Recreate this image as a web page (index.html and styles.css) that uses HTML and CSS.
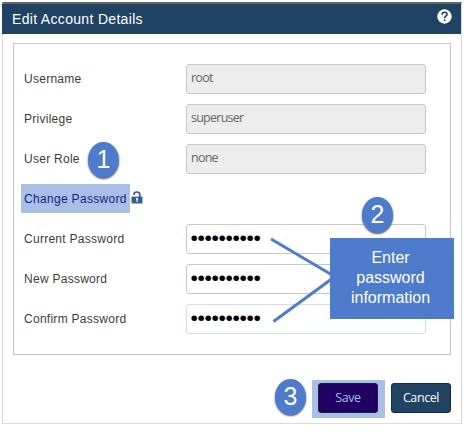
FILE: index.html
```html
<!DOCTYPE html>
<html lang="en">
<head>
<meta charset="utf-8">
<title>Edit Account Details</title>
<link rel="stylesheet" href="styles.css">
</head>
<body>
<main class="dialog">
  <header class="titlebar">
    <h1>Edit Account Details</h1>
    <svg class="help" width="15" height="15" viewBox="0 0 15 15"><circle cx="7.5" cy="7.5" r="7.2" fill="#fff"/><path d="M5 5.7C5.1 4 6.1 3.3 7.5 3.3c1.5 0 2.5.8 2.5 2.1 0 1.8-2.4 1.9-2.4 3.8" fill="none" stroke="#204263" stroke-width="1.6"/><path d="M6.8 10.3h1.6v1.6H6.8z" fill="#204263"/></svg>
  </header>
  <form class="panel">
    <div class="row"><label>Username</label><div class="field off">root</div></div>
    <div class="row"><label>Privilege</label><div class="field off">superuser</div></div>
    <div class="row"><label>User Role</label><div class="field off">none</div></div>
    <div class="row change"><a class="mark">Change Password</a><svg width="12" height="13" viewBox="0 0 12 13"><path d="M3 4V3.4C3 1.9 4 1 5.8 1S8.8 1.9 8.8 3.4V6" fill="none" stroke="#32648d" stroke-width="1.7"/><path d="M.5 5.6h11v6.9H.5z" fill="#32648d"/><path d="M5 7h2v1.8h-.4v2.1H5.4V8.800H5z" fill="#e8eff5"/></svg></div>
    <div class="row"><label>Current Password</label><div class="field secret">••••••••••</div></div>
    <div class="row"><label>New Password</label><div class="field secret">••••••••••</div></div>
    <div class="row"><label>Confirm Password</label><div class="field secret focus">••••••••••</div></div>
  </form>
  <footer class="actions">
    <div class="save-mark"><button class="save" type="button">Save</button></div>
    <button type="button">Cancel</button>
  </footer>
</main>
<svg class="lines" width="464" height="441"><path d="M271 239L333 275.500M273.500 321.500L333 278" fill="none" stroke="#4e7bcb" stroke-width="3"/></svg>
<div class="callout">Enter<br>password<br>information</div>
<div class="badge one">1</div>
<div class="badge two">2</div>
<div class="badge three">3</div>
</body>
</html>
```
FILE: styles.css
```css
* { box-sizing: border-box; }
body {
  position: relative;
  width: 464px;
  height: 441px;
  margin: 0;
  padding: 2px;
  overflow: hidden;
  background: #fff;
  font-family: "Liberation Sans", Arial, sans-serif;
}
.dialog {
  width: 460px;
  height: 422px;
  border: 1px solid #dadada;
  border-top: 2px solid #666;
}
.titlebar {
  display: flex;
  justify-content: space-between;
  height: 30px;
  margin-left: -1px;
  padding: 5px 9px 0 10px;
  background: #204263;
  color: #fff;
}
.titlebar h1 {
  margin: 2px 0 0;
  font-size: 14px;
  font-weight: 400;
  line-height: 16px;
  letter-spacing: .32px;
}
.panel {
  width: 438px;
  height: 312px;
  margin: 9px 0 0 10px;
  padding: 20px 24px 0 10px;
  border: 1px solid #c8c8c8;
}
.row { display: flex; height: 40px; }
.row label {
  width: 162px;
  padding-top: 7px;
  font-size: 12px;
  line-height: 16px;
  letter-spacing: .27px;
  color: #3c3c3c;
}
.field {
  width: 240px;
  height: 30px;
  padding: 5px 4px;
  border: 1px solid #c8c8c8;
  border-radius: 3px;
  background: #fff;
  font-family: "Open Sans", sans-serif;
  font-size: 12.5px;
  line-height: 16px;
  letter-spacing: -.75px;
}
.off { background: #ededed; color: #666; }
.secret {
  padding: 5px 3.5px;
  color: #000;
  font-family: "Liberation Sans", Arial, sans-serif;
  font-size: 21px;
  line-height: 16px;
  letter-spacing: -.35px;
}
.focus { border-color: #cfdff0; }
.mark {
  width: 109px;
  height: 29px;
  margin-left: -3px;
  padding: 7px 0 0 3px;
  background: #a9bfe6;
  color: #171d87;
  font-size: 12px;
  line-height: 16px;
  letter-spacing: .32px;
  white-space: nowrap;
}
.change svg { margin: 7px 0 0 1px; }
.actions {
  display: flex;
  justify-content: flex-end;
  gap: 6px;
  margin: 25px 10px 0 0;
}
.save-mark {
  width: 73px;
  height: 38px;
  padding: 3px 6px;
  background: #a9bfe6;
}
.actions button {
  width: 60px;
  height: 30px;
  padding: 0 0 1px;
  border: 1px solid #142b41;
  border-radius: 3px;
  background: #204263;
  color: #fff;
  font: 12.5px "Open Sans", sans-serif;
  letter-spacing: -.4px;
}
.actions > button { margin-top: 3px; }
.actions .save {
  display: block;
  border-color: #14233f;
  background: #200063;
  color: #a9bfe6;
}
.lines { position: absolute; left: 0; top: 0; }
.callout {
  position: absolute;
  left: 330px;
  top: 238px;
  width: 124px;
  height: 81px;
  padding: 10px 3px 0 0;
  background: #4e7bcb;
  color: #fff;
  font-size: 16px;
  line-height: 20px;
  text-align: center;
}
.badge {
  position: absolute;
  width: 31px;
  height: 36px;
  border-radius: 50%;
  background: #4e7bcb;
  box-shadow: 0 1px 2px #555;
  color: #fff;
  font-size: 25px;
  line-height: 35px;
  text-align: center;
}
.one { left: 88px; top: 142px; }
.two { left: 362px; top: 197px; }
.three { left: 275px; top: 379px; }
```
